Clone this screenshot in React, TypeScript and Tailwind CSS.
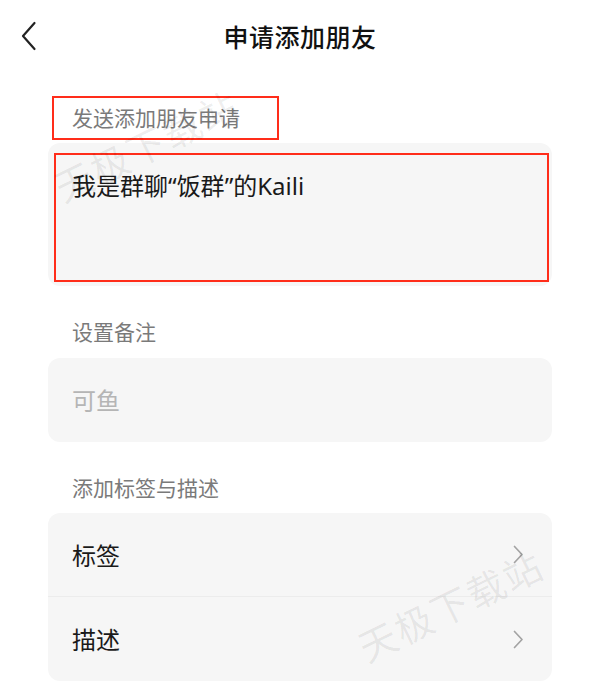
import React from "react"

const font = { fontFamily: '"Noto Sans CJK SC", "Noto Sans", sans-serif' }
const latin = { fontFamily: '"Noto Sans", sans-serif' }

// Chevron used on list rows
const RowArrow = () => (
  <svg width="11" height="19" viewBox="0 0 11 19" fill="none">
    <path d="M1.5 1.5 L9 9.5 L1.5 17.5" stroke="#a3a3a3" strokeWidth="1.7" strokeLinecap="round" strokeLinejoin="round" />
  </svg>
)

const SectionLabel = ({ children, boxed = false }: { children: React.ReactNode; boxed?: boolean }) => (
  <div className="px-[48px]">
    <div
      className={`h-[44px] flex items-center text-[21px] text-[#7a7a7a] ${
        boxed ? "w-[227px] border-2 border-[#ff2d1a] pl-[18px] ml-[4px]" : "pl-[24px]"
      }`}
    >
      {children}
    </div>
  </div>
)

const Watermark = ({ className }: { className: string }) => (
  <div
    className={`absolute pointer-events-none text-[38px] text-[#000]/[0.07] tracking-[2px] -rotate-[26deg] whitespace-nowrap ${className}`}
  >
    天极下载站
  </div>
)

export default function App() {
  return (
    <div className="relative w-[600px] h-[689px] bg-white overflow-hidden" style={font}>
      {/* header */}
      <div className="relative h-[74px] flex items-center justify-center">
        <button className="absolute left-[21px] top-[21px] p-0">
          <svg width="16" height="30" viewBox="0 0 16 30" fill="none">
            <path d="M13.5 2 L2 15 L13.5 28" stroke="#222" strokeWidth="2.2" strokeLinecap="round" strokeLinejoin="round" />
          </svg>
        </button>
        <h1 className="text-[25px] font-medium text-[#111] tracking-[0.5px]">申请添加朋友</h1>
      </div>

      <div className="mt-[22px]">
        <SectionLabel boxed>发送添加朋友申请</SectionLabel>
      </div>

      <div className="px-[48px] mt-[3px]">
        <div className="h-[143px] rounded-[12px] bg-[#f6f6f6] pt-[10px] pl-[6px] pr-[3px]">
          <div className="h-[129px] border-2 border-[#ff2d1a] px-[16px] pt-[15px] text-[24px] text-[#1a1a1a] leading-[30px]">
            我是群聊<span style={latin}>“</span>饭群<span style={latin}>”</span>的<span style={latin}>Kaili</span>
          </div>
        </div>
      </div>

      <div className="mt-[24px]">
        <SectionLabel>设置备注</SectionLabel>
      </div>

      <div className="px-[48px] mt-[4px]">
        <div className="h-[84px] rounded-[12px] bg-[#f6f6f6] flex items-center px-[24px] text-[24px] text-[#b5b5b5]">
          可鱼
        </div>
      </div>

      <div className="mt-[24px]">
        <SectionLabel>添加标签与描述</SectionLabel>
      </div>

      <div className="px-[48px] mt-[3px]">
        <div className="rounded-[12px] bg-[#f6f6f6] overflow-hidden">
          {["标签", "描述"].map((t, i) => (
            <div
              key={t}
              className={`h-[84px] flex items-center justify-between pl-[24px] pr-[28px] ${
                i === 0 ? "border-b border-[#ececec]" : ""
              }`}
            >
              <span className="text-[24px] text-[#1a1a1a]">{t}</span>
              <RowArrow />
            </div>
          ))}
        </div>
      </div>

      <Watermark className="left-[46px] top-[116px]" />
      <Watermark className="left-[350px] top-[576px]" />
    </div>
  )
}
